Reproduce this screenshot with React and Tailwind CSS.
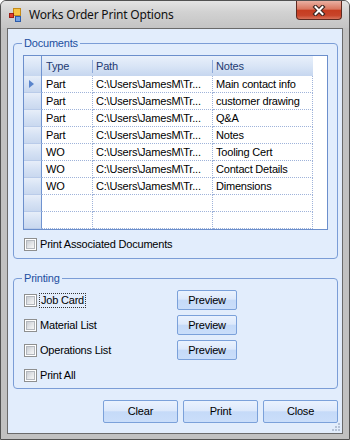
import React from "react";

const rows = [
  ["Part", "Main contact info"],
  ["Part", "customer drawing"],
  ["Part", "Q&A"],
  ["Part", "Notes"],
  ["WO", "Tooling Cert"],
  ["WO", "Contact Details"],
  ["WO", "Dimensions"],
  ["", ""],
  ["", ""],
];

function Check() {
  return (
    <span className="w-[13px] h-[13px] shrink-0 border border-[#8e8f8f] bg-white p-px flex">
      <span className="flex-1 border border-[#b4b8be] bg-[linear-gradient(135deg,#c9cdd3_0%,#e4e6e9_55%,#f7f7f7_100%)]"></span>
    </span>
  );
}

function Btn({ children, className }) {
  return (
    <div
      className={
        "flex items-center justify-center border border-[#7ba1da] rounded-[2px] bg-[linear-gradient(to_bottom,#eaf2fe_0%,#dde9fb_45%,#c5daf8_52%,#cadefa_100%)] text-black " +
        className
      }
    >
      {children}
    </div>
  );
}

const hdr =
  "bg-[linear-gradient(to_bottom,#e9f0fb_0%,#d9e5f6_50%,#c6d6ef_100%)]";

export default function App() {
  return (
    <div className="w-[350px] h-[440px] flex flex-col bg-[#c1c1c1] border border-[#525252] rounded-t-[6px] overflow-hidden font-['Liberation_Sans',Arial,sans-serif] text-[11px] tracking-[-0.2px] text-black">
      {/* Title bar */}
      <div className="h-[27px] shrink-0 flex items-center bg-[linear-gradient(to_bottom,#e4e4e4_0%,#d2d2d2_40%,#c4c4c4_100%)]">
        <svg width="14" height="14" viewBox="0 0 14 14" className="ml-[8px] shrink-0">
          <rect x="4.5" y="0.5" width="7" height="7" fill="#f6c445" stroke="#c48a18" />
          <rect x="0.5" y="5.5" width="4" height="4" fill="#e2402f" stroke="#9b1d14" />
          <rect x="6.5" y="8.5" width="5" height="5" fill="#74a2e3" stroke="#2d5caa" />
        </svg>
        <span className="ml-[6px] font-['Noto_Sans',sans-serif] text-[12px] tracking-[-0.2px] text-[#111]">
          Works Order Print Options
        </span>
        <div className="ml-auto mr-[7px] self-start w-[46px] h-[19px] rounded-b-[4px] border border-t-0 border-[#5e2a21] bg-[linear-gradient(to_bottom,#eab0a2_0%,#d9765f_45%,#c63c20_52%,#c8442a_80%,#d8725a_100%)] flex items-center justify-center">
          <svg width="14" height="11" viewBox="0 0 14 11">
            <path d="M3.5 2 L10.5 9 M10.5 2 L3.5 9" stroke="#3b2520" strokeWidth="4.2" strokeLinecap="square" />
            <path d="M3.5 2 L10.5 9 M10.5 2 L3.5 9" stroke="#ffffff" strokeWidth="2" strokeLinecap="square" />
          </svg>
        </div>
      </div>

      {/* Client area */}
      <div className="relative flex-1 mx-[6px] mb-[5px] border border-[#6a6a6a] bg-[#e2edfc] flex flex-col pt-[8px]">
        {/* Documents */}
        <fieldset className="ml-[5px] w-[325px] border border-[#7b9dd6] rounded-[4px] px-[9px] pt-[5px] pb-[7px]">
          <legend className="-ml-px px-[2px] leading-[13px] text-[#1c4fa0]">Documents</legend>
          <div className="w-[305px] h-[175px] border border-[#6c8fcc] bg-white flex flex-col">
            <div className="h-[20px] shrink-0 flex">
              <div className={"w-[18px] border-r border-[#6f93d0] " + hdr}></div>
              <div className={"relative w-[51px] flex items-center pl-[4px] text-[#1d3a72] " + hdr}>
                Type
                <span className="absolute right-0 top-[4px] bottom-[3px] w-px bg-[#8eaadb]"></span>
              </div>
              <div className={"relative w-[120px] flex items-center pl-[3px] text-[#1d3a72] " + hdr}>
                Path
                <span className="absolute right-0 top-[4px] bottom-[3px] w-px bg-[#8eaadb]"></span>
              </div>
              <div className={"w-[100px] flex items-center pl-[3px] text-[#1d3a72] " + hdr}>Notes</div>
              <div className="flex-1 bg-white"></div>
            </div>
            {rows.map((r, i) => (
              <div key={i} className="h-[17px] shrink-0 flex">
                <div className="w-[18px] border-r border-b border-r-[#6f93d0] border-b-[#b9cbe9] bg-[linear-gradient(to_bottom,#e7eef9_0%,#d6e2f4_50%,#c9d8ef_100%)] flex items-center pl-[5px]">
                  {i === 0 && (
                    <svg width="5" height="8" viewBox="0 0 5 8">
                      <path d="M0 0 L5 4 L0 8 Z" fill="#5a85cc" />
                    </svg>
                  )}
                </div>
                <div className="w-[51px] border-r border-b border-dotted border-[#9fb3da] flex items-center pl-[4px] whitespace-nowrap overflow-hidden">
                  {r[0]}
                </div>
                <div className="w-[120px] border-r border-b border-dotted border-[#9fb3da] flex items-center pl-[3px] whitespace-nowrap overflow-hidden">
                  {r[0] ? "C:\\Users\\JamesM\\Tr..." : ""}
                </div>
                <div className="w-[100px] border-r border-b border-dotted border-[#9fb3da] flex items-center pl-[3px] whitespace-nowrap overflow-hidden">
                  {r[1]}
                </div>
                <div className="flex-1 bg-white"></div>
              </div>
            ))}
          </div>
          <div className="mt-[8px] ml-px flex items-center gap-[3px] h-[13px]">
            <Check />
            <span>Print Associated Documents</span>
          </div>
        </fieldset>

        {/* Printing */}
        <fieldset className="ml-[5px] mt-[13px] w-[325px] border border-[#7b9dd6] rounded-[4px] pl-[10px] pr-[9px] pt-[5px] pb-[3px]">
          <legend className="-ml-[2px] px-[2px] leading-[13px] text-[#1c4fa0]">Printing</legend>
          <div className="flex flex-col gap-[5px]">
            <div className="h-[20px] flex items-center">
              <div className="w-[153px] flex items-center gap-[1px]">
                <Check />
                <span className="ml-px px-px border border-dotted border-[#333] leading-[11px] py-px">Job Card</span>
              </div>
              <Btn className="w-[60px] h-[20px]">Preview</Btn>
            </div>
            <div className="h-[20px] flex items-center">
              <div className="w-[153px] flex items-center gap-[3px]">
                <Check />
                <span>Material List</span>
              </div>
              <Btn className="w-[60px] h-[20px]">Preview</Btn>
            </div>
            <div className="h-[20px] flex items-center">
              <div className="w-[153px] flex items-center gap-[3px]">
                <Check />
                <span>Operations List</span>
              </div>
              <Btn className="w-[60px] h-[20px]">Preview</Btn>
            </div>
            <div className="h-[20px] flex items-center">
              <div className="w-[153px] flex items-center gap-[3px]">
                <Check />
                <span>Print All</span>
              </div>
            </div>
          </div>
        </fieldset>

        {/* Bottom buttons */}
        <div className="mt-[11px] pl-[95px] flex gap-[5px]">
          <Btn className="w-[75px] h-[23px]">Clear</Btn>
          <Btn className="w-[75px] h-[23px]">Print</Btn>
          <Btn className="w-[75px] h-[23px]">Close</Btn>
        </div>

        {/* Size grip */}
        <svg width="10" height="10" viewBox="0 0 10 10" className="absolute right-px bottom-px">
          <rect x="7" y="1" width="2" height="2" fill="#b5c2d6" />
          <rect x="4" y="4" width="2" height="2" fill="#b5c2d6" />
          <rect x="7" y="4" width="2" height="2" fill="#b5c2d6" />
          <rect x="1" y="7" width="2" height="2" fill="#b5c2d6" />
          <rect x="4" y="7" width="2" height="2" fill="#b5c2d6" />
          <rect x="7" y="7" width="2" height="2" fill="#b5c2d6" />
        </svg>
      </div>
    </div>
  );
}
